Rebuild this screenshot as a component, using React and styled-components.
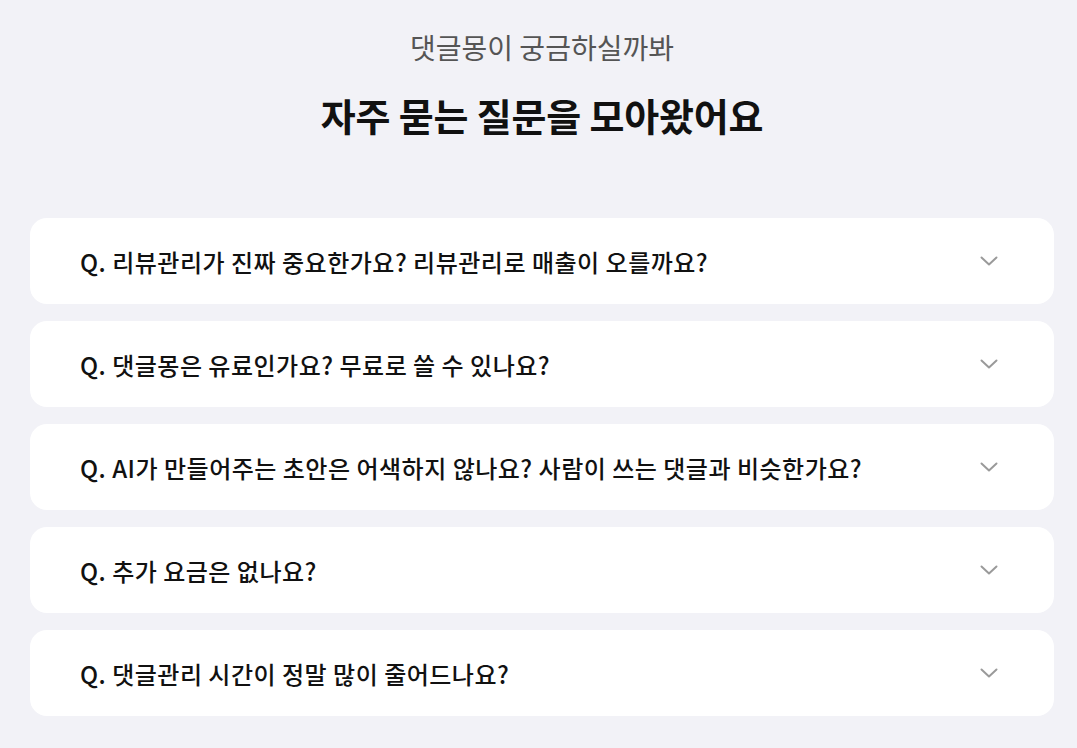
import React from "react";
import styled, { createGlobalStyle } from "styled-components";

const Global = createGlobalStyle`
  html, body { margin: 0; padding: 0; background: #f2f2f7; }
  body { font-family: "Noto Sans CJK KR", "Inter", sans-serif; }
`;

const Page = styled.div`
  width: 1024px;
  margin-left: 30px;
  padding-top: 27px;
  display: flex;
  flex-direction: column;
  align-items: center;
`;

const Sub = styled.p`
  margin: 0;
  font-size: 28px;
  line-height: 40px;
  font-weight: 400;
  color: #555;
  letter-spacing: 0;
`;

const Title = styled.h2`
  margin: 23px 0 0;
  font-size: 38px;
  line-height: 50px;
  font-weight: 700;
  color: #111;
  letter-spacing: -0.2px;
`;

const List = styled.div`
  width: 100%;
  margin-top: 78px;
  display: flex;
  flex-direction: column;
  gap: 17px;
`;

const Item = styled.div`
  height: 86px;
  background: #fff;
  border-radius: 17px;
  display: flex;
  align-items: center;
  justify-content: space-between;
  padding: 0 56px 0 50px;
  box-sizing: border-box;
`;

const Question = styled.span`
  font-size: 24px;
  font-weight: 500;
  color: #111;
  letter-spacing: 0.5px;
`;

const Chevron = () => (
  <svg width="18" height="10" viewBox="0 0 18 10" fill="none">
    <path d="M1.5 1.5 L9 8.5 L16.5 1.5" stroke="#9a9a9a" strokeWidth="2" strokeLinecap="round" strokeLinejoin="round" />
  </svg>
);

const questions = [
  "Q. 리뷰관리가 진짜 중요한가요? 리뷰관리로 매출이 오를까요?",
  "Q. 댓글몽은 유료인가요? 무료로 쓸 수 있나요?",
  "Q. AI가 만들어주는 초안은 어색하지 않나요? 사람이 쓰는 댓글과 비슷한가요?",
  "Q. 추가 요금은 없나요?",
  "Q. 댓글관리 시간이 정말 많이 줄어드나요?",
];

export default function App() {
  return (
    <>
      <Global />
      <Page>
        <Sub>댓글몽이 궁금하실까봐</Sub>
        <Title>자주 묻는 질문을 모아왔어요</Title>
        <List>
          {questions.map((q) => (
            <Item key={q}>
              <Question>{q}</Question>
              <Chevron />
            </Item>
          ))}
        </List>
      </Page>
    </>
  );
}
